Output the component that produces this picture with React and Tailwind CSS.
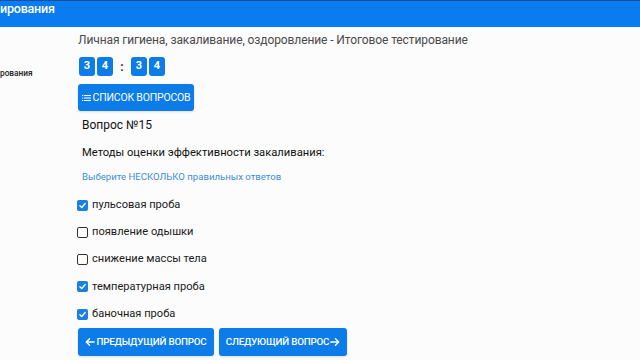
import React, { useState } from 'react';

const answers = [
  { text: 'пульсовая проба', checked: true },
  { text: 'появление одышки', checked: false },
  { text: 'снижение массы тела', checked: false },
  { text: 'температурная проба', checked: true },
  { text: 'баночная проба', checked: true },
];

const Box = ({ children }) => (
  <span className="w-4 h-[19px] rounded-[3px] bg-[#0b7ce8] text-white text-[11px] font-bold flex items-center justify-center">
    {children}
  </span>
);

const Check = ({ checked }) => (
  <span
    className={
      checked
        ? 'w-[11px] h-[11px] rounded-[2px] bg-[#1a7fe0] flex items-center justify-center'
        : 'w-[11px] h-[11px] rounded-[2px] border-[1.5px] border-[#333] bg-white'
    }
  >
    {checked && (
      <svg viewBox="0 0 12 12" className="w-[9px] h-[9px]">
        <path d="M2.5 6.2 L5 8.6 L9.6 3.4" fill="none" stroke="white" strokeWidth="1.8" strokeLinecap="round" strokeLinejoin="round" />
      </svg>
    )}
  </span>
);

const App = () => {
  const [items, setItems] = useState(answers);

  const toggle = (i) => {
    setItems(items.map((a, j) => (j === i ? { ...a, checked: !a.checked } : a)));
  };

  return (
    <div className="w-[640px] h-[360px] overflow-hidden bg-[#fcfcfc] font-['Roboto',sans-serif]">
      {/* header */}
      <div className="h-[27px] bg-[#0a7cf0] border-t border-[#1d4f9c] pt-px">
        <div className="text-white text-[12.5px] font-medium leading-[14px] tracking-[-0.2px]">ирования</div>
      </div>

      <div className="flex">
        {/* sidebar */}
        <div className="w-[78px] shrink-0 pt-[40px] text-[8.3px] leading-[12px] font-medium text-[#222]">
          рования
        </div>

        {/* main */}
        <div className="flex flex-col">
          <div className="text-[12px] tracking-[-0.1px] text-[#4a4a4a] mt-[5px] leading-[16px] whitespace-nowrap">
            Личная гигиена, закаливание, оздоровление - Итоговое тестирование
          </div>

          <div className="flex items-center mt-[9px] ml-px">
            <div className="flex gap-[2px]">
              <Box>3</Box>
              <Box>4</Box>
            </div>
            <span className="w-[18px] text-center text-[12px] font-bold text-[#333]">:</span>
            <div className="flex gap-[2px]">
              <Box>3</Box>
              <Box>4</Box>
            </div>
          </div>

          <button className="mt-[8px] w-[116px] h-[27px] rounded-[3px] bg-[#0b7ce8] text-white text-[10.5px] tracking-[-0.2px] whitespace-nowrap flex items-center justify-center gap-[2px] shadow-sm">
            <svg viewBox="0 0 12 10" className="w-[9px] h-[8px]">
              <rect x="0" y="1" width="1.5" height="1.4" fill="white" />
              <rect x="0" y="4.3" width="1.5" height="1.4" fill="white" />
              <rect x="0" y="7.6" width="1.5" height="1.4" fill="white" />
              <rect x="2.6" y="1" width="9.4" height="1.4" fill="white" />
              <rect x="2.6" y="4.3" width="9.4" height="1.4" fill="white" />
              <rect x="2.6" y="7.6" width="9.4" height="1.4" fill="white" />
            </svg>
            СПИСОК ВОПРОСОВ
          </button>

          <div className="ml-[4px] mt-[6px] text-[12px] text-[#111] leading-[16px]">Вопрос №15</div>
          <div className="ml-[4px] mt-[12px] text-[11.2px] text-[#111] leading-[16px] whitespace-nowrap">
            Методы оценки эффективности закаливания:
          </div>
          <div className="ml-[4px] mt-[9px] text-[9.6px] text-[#3d8ed6] leading-[14px] whitespace-nowrap">
            Выберите НЕСКОЛЬКО правильных ответов
          </div>

          <div className="flex flex-col gap-[11.3px] mt-[13px] ml-[-1px]">
            {items.map((a, i) => (
              <label key={i} className="flex items-center gap-[4px] h-[16px] cursor-pointer" onClick={() => toggle(i)}>
                <Check checked={a.checked} />
                <span className="text-[11.1px] text-[#1a1a1a] whitespace-nowrap">{a.text}</span>
              </label>
            ))}
          </div>

          <div className="flex gap-[5px] mt-[6px]">
            <button className="w-[136px] h-[28px] shrink-0 rounded-[3px] bg-[#0b7ce8] text-white text-[9.8px] tracking-[-0.2px] font-medium whitespace-nowrap flex items-center justify-center gap-[1px] shadow-sm">
              <svg viewBox="0 0 12 12" className="w-[10px] h-[10px]">
                <path d="M11 6H1.5M5.5 2L1.5 6L5.5 10" fill="none" stroke="white" strokeWidth="1.6" strokeLinecap="round" strokeLinejoin="round" />
              </svg>
              ПРЕДЫДУЩИЙ ВОПРОС
            </button>
            <button className="w-[128px] h-[28px] shrink-0 rounded-[3px] bg-[#0b7ce8] text-white text-[9.8px] tracking-[-0.2px] font-medium whitespace-nowrap flex items-center justify-center gap-[1px] shadow-sm">
              СЛЕДУЮЩИЙ ВОПРОС
              <svg viewBox="0 0 12 12" className="w-[10px] h-[10px]">
                <path d="M1 6H10.5M6.5 2L10.5 6L6.5 10" fill="none" stroke="white" strokeWidth="1.6" strokeLinecap="round" strokeLinejoin="round" />
              </svg>
            </button>
          </div>
        </div>
      </div>
    </div>
  );
};

export default App;
